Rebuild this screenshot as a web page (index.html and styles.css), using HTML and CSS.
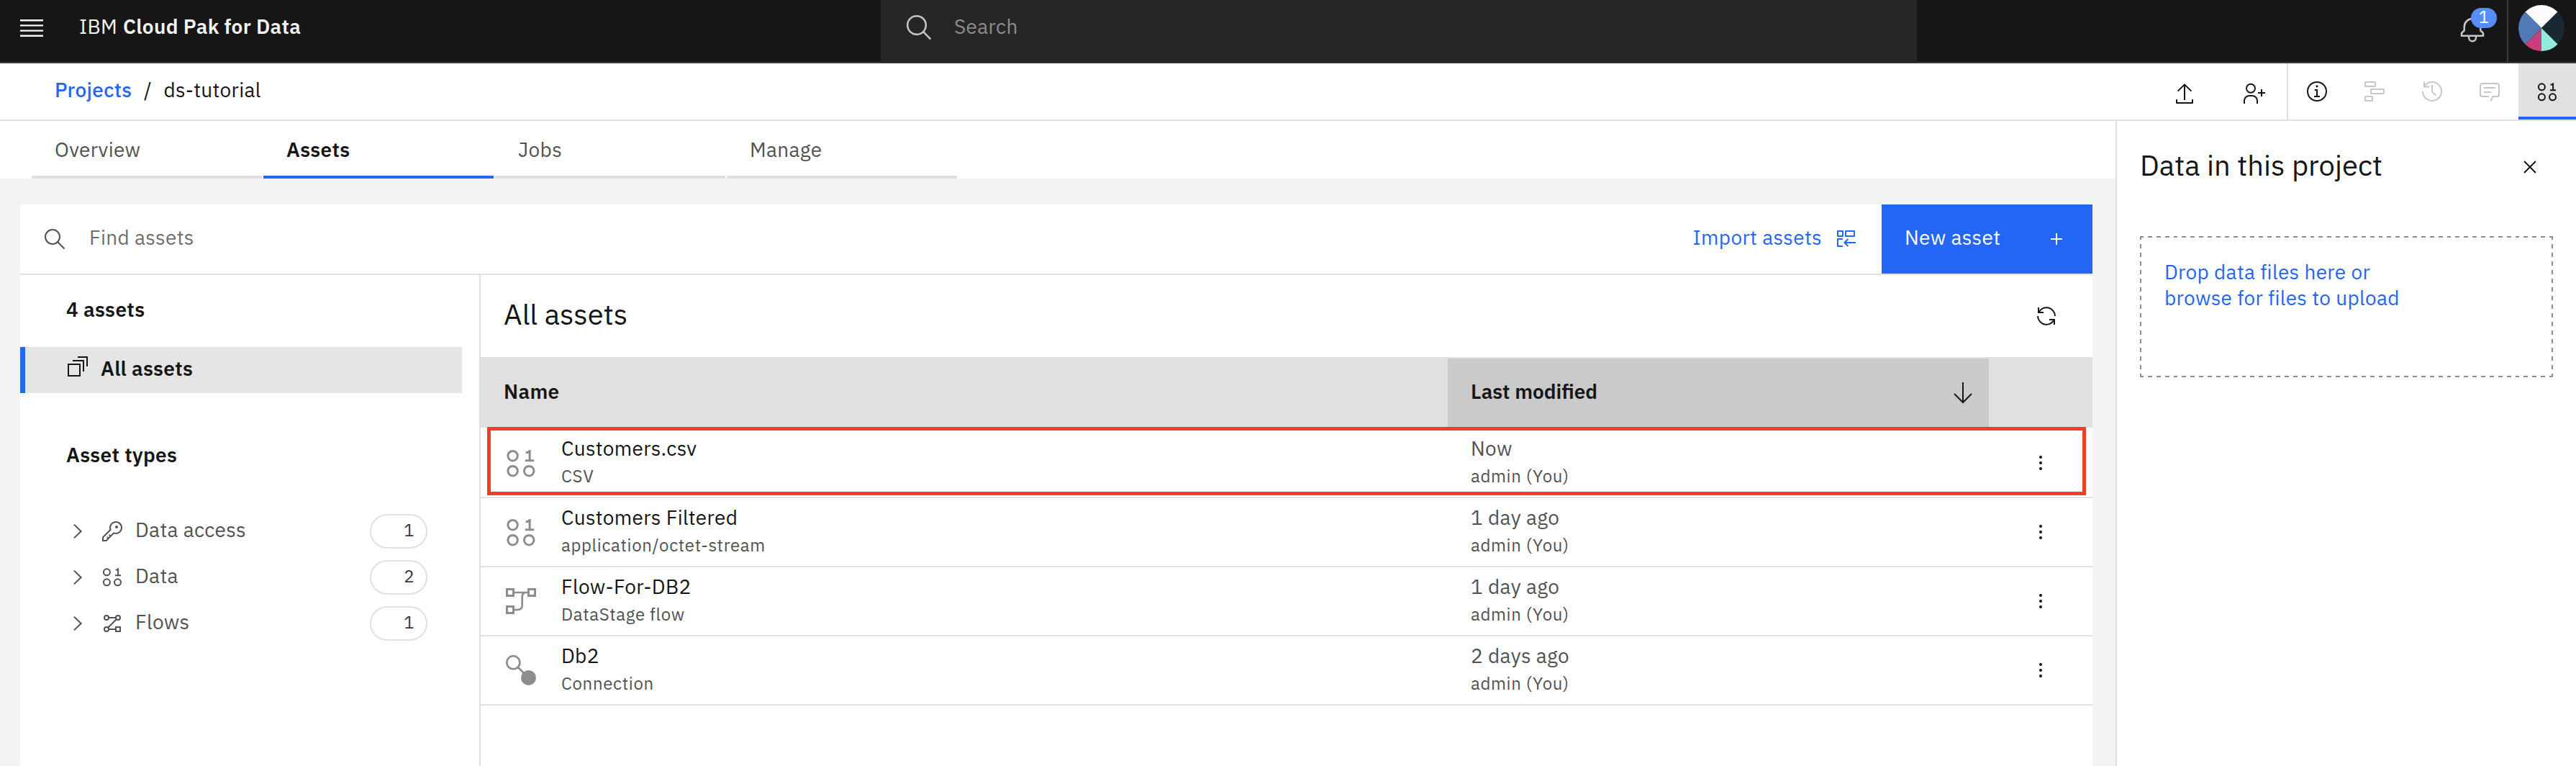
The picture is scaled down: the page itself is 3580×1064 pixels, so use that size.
FILE: index.html
```html
<!DOCTYPE html>
<html lang="en">
<head>
<meta charset="utf-8">
<title>ds-tutorial - IBM Cloud Pak for Data</title>
<link rel="stylesheet" href="styles.css">
</head>
<body>
<svg class="defs" aria-hidden="true">
  <symbol id="data" viewBox="0 0 32 32"><g fill="none" stroke="currentColor" stroke-width="2"><circle cx="8.4" cy="8.8" r="4.5"/><circle cx="8.4" cy="22.8" r="4.5"/><circle cx="23.5" cy="22.8" r="4.5"/><path d="M20.6 5.6h1.6q1.9 0 1.9-2.2M24.1 3.3v10M19.9 13.2H28"/></g></symbol>
  <symbol id="chevron" viewBox="0 0 32 32"><path d="M11 6.6 20.6 16 11 25.4" fill="none" stroke="currentColor" stroke-width="2"/></symbol>
  <symbol id="kebab" viewBox="0 0 32 32"><g fill="currentColor"><circle cx="16" cy="8" r="2"/><circle cx="16" cy="16" r="2"/><circle cx="16" cy="24" r="2"/></g></symbol>
</svg>

<header class="top">
  <button class="menu"><svg viewBox="0 0 20 20"><path d="M2 14.8H18V16H2zM2 11.2H18V12.4H2zM2 7.6H18V8.8H2zM2 4H18V5.2H2z" fill="currentColor"/></svg></button>
  <div class="brand"><span class="brand-ibm">IBM</span><b>Cloud Pak for Data</b></div>
  <div class="search">
    <svg viewBox="0 0 40 40"><path d="M27.4 27.4 37.3 37.3" stroke="currentColor" stroke-width="2.6"/><circle cx="18" cy="18" r="12.8" fill="none" stroke="currentColor" stroke-width="2.5"/></svg>
    <span>Search</span>
  </div>
  <div class="account">
    <button class="bell">
      <svg viewBox="0 0 32 32"><path fill="currentColor" d="M28.7071,19.293,26,16.5859V13a10.0136,10.0136,0,0,0-9-9.9492V1H15V3.0508A10.0136,10.0136,0,0,0,6,13v3.5859L3.2929,19.293A1,1,0,0,0,3,20v3a1,1,0,0,0,1,1h7v.7768a5.152,5.152,0,0,0,4.5,5.1987A5.0057,5.0057,0,0,0,21,25V24h7a1,1,0,0,0,1-1V20A1,1,0,0,0,28.7071,19.293ZM19,25a3,3,0,0,1-6,0V24h6Zm8-3H5V20.4141L7.707,17.707A1,1,0,0,0,8,17V13a8,8,0,0,1,16,0v4a1,1,0,0,0,.293.707L27,20.4141Z"/></svg>
      <span class="badge">1</span>
    </button>
    <button class="avatar"><svg viewBox="-32 -32 64 64"><path fill="#fcfcfc" d="M0 0-22.6-22.6A32 32 0 0 1 22.6-22.6Z"/><path fill="#192833" d="M0 0 22.6-22.6A32 32 0 0 1 22.6 22.6Z"/><path fill="#93ebdb" d="M0 0 22.6 22.6A32 32 0 0 1 0 32Z"/><path fill="#c93f7e" d="M0 0V32A32 32 0 0 1-22.6 22.6Z"/><path fill="#4f79b7" d="M0 0-22.6 22.6A32 32 0 0 1-22.6-22.6Z"/></svg></button>
  </div>
</header>

<div class="toolbar">
  <nav class="crumbs"><a>Projects</a><span>/</span><span>ds-tutorial</span></nav>
  <div class="actions">
    <button><svg viewBox="0 0 32 32"><path d="M16 25V4M6.6 12.6 16 3.4l9.4 9.2M5 24v5h22v-5" fill="none" stroke="currentColor" stroke-width="2" stroke-linejoin="round"/></svg></button>
    <button><svg viewBox="0 0 32 32"><g fill="none" stroke="currentColor" stroke-width="2"><circle cx="12" cy="8.8" r="6"/><path d="M3 30v-4a7 7 0 0 1 7-7h4a7 7 0 0 1 7 7v4M27 10v10M22 15h10"/></g></svg></button>
  </div>
  <div class="panels">
    <button><svg viewBox="0 0 32 32"><circle cx="16" cy="16" r="13" fill="none" stroke="currentColor" stroke-width="2"/><path d="M12.8 14H16v9M12 23h8" fill="none" stroke="currentColor" stroke-width="2"/><circle cx="16" cy="8.8" r="1.6" fill="currentColor"/></svg></button>
    <button class="off"><svg viewBox="0 0 32 32"><g fill="none" stroke="currentColor" stroke-width="2"><rect x="3" y="3" width="14" height="6" rx=".6"/><rect x="11" y="13" width="18" height="6" rx=".6"/><rect x="3" y="23" width="10" height="6" rx=".6"/></g></svg></button>
    <button class="off"><svg viewBox="0 0 32 32"><path d="M3 16A13 13 0 1 0 5.6 8.2M5 2.4v7h7.4M16 7v9.2l5.4 5.4" fill="none" stroke="currentColor" stroke-width="2"/></svg></button>
    <button class="off"><svg viewBox="0 0 32 32"><path d="M15 23H6a3 3 0 0 1-3-3V8a3 3 0 0 1 3-3h20a3 3 0 0 1 3 3v12a3 3 0 0 1-3 3h-5.4l-3.2 6.4M8 11h16M8 17h10" fill="none" stroke="currentColor" stroke-width="2"/></svg></button>
    <button class="active"><svg><use href="#data"/></svg></button>
  </div>
</div>

<div class="page">
  <main class="main">
    <nav class="tabs">
      <a>Overview</a><a class="on">Assets</a><a>Jobs</a><a>Manage</a>
    </nav>
    <section class="assets">
      <div class="finder">
        <svg class="glass" viewBox="0 0 32 32"><circle cx="13" cy="13" r="10" fill="none" stroke="currentColor" stroke-width="2"/><path d="M20.3 20.3 29.5 29.5" stroke="currentColor" stroke-width="2"/></svg>
        <span class="find">Find assets</span>
        <button class="import"><span>Import assets</span><svg viewBox="0 0 32 32"><g fill="none" stroke="currentColor" stroke-width="2" stroke-linejoin="round"><path d="M4 5h7v7H4zM15 5h12v7H15zM11 16H4v10h7"/><path d="M29 21H13.4M18.4 16 13.4 21l5 5"/></g></svg></button>
        <button class="new"><span>New asset</span><svg viewBox="0 0 32 32"><path d="M16 8v16M8 16h16" stroke="currentColor" stroke-width="2"/></svg></button>
      </div>
      <div class="body">
        <aside class="side">
          <h3>4 assets</h3>
          <a class="all"><svg viewBox="0 0 32 32"><path d="M3 13h16v16H3zM9 8h15v15M16 3h13v13" fill="none" stroke="currentColor" stroke-width="2"/></svg><span>All assets</span></a>
          <h3 class="types">Asset types</h3>
          <ul>
            <li><svg><use href="#chevron"/></svg><svg class="kind" viewBox="0 0 32 32"><path fill="currentColor" d="M21,2a8.9977,8.9977,0,0,0-8.6119,11.6118L2,24v6H8L18.3881,19.6118A9,9,0,1,0,21,2Zm0,16a7.0125,7.0125,0,0,1-2.0322-.3022L17.821,17.35l-.8472.8472-3.1811,3.1812L12.4141,20,11,21.4141l1.3787,1.3786-1.5859,1.586L9.4141,23,8,24.4141l1.3787,1.3786L7.1716,28H4V24.8284l9.8023-9.8023.8472-.8474-.3473-1.1467A7,7,0,1,1,21,18Z"/><circle cx="22" cy="10" r="2" fill="currentColor"/></svg><span class="label">Data access</span><span class="pill">1</span></li>
            <li><svg><use href="#chevron"/></svg><svg class="kind"><use href="#data"/></svg><span class="label">Data</span><span class="pill">2</span></li>
            <li><svg><use href="#chevron"/></svg><svg class="kind" viewBox="0 0 32 32"><g fill="none" stroke="currentColor" stroke-width="2"><circle cx="8" cy="8" r="3"/><circle cx="24" cy="8" r="3"/><circle cx="8" cy="24" r="3"/><path d="M21 21h6v6h-6zM11 8h10M11 24h10M10 22 22 10"/></g></svg><span class="label">Flows</span><span class="pill">1</span></li>
          </ul>
        </aside>
        <div class="list">
          <div class="list-head"><h2>All assets</h2><svg viewBox="0 0 32 32"><path d="M28 16A12 12 0 0 0 5.6 10.2M5 4v7h7M4 16a12 12 0 0 0 22.4 5.8M27 28v-7h-7" fill="none" stroke="currentColor" stroke-width="2"/></svg></div>
          <div class="row head"><div>Name</div><div class="sorted"><span>Last modified</span><svg viewBox="0 0 32 32"><path d="M16 1v27M4 17 16 29 28 17" fill="none" stroke="currentColor" stroke-width="2"/></svg></div></div>
          <div class="row marked">
            <svg class="type"><use href="#data"/></svg>
            <div class="name"><p>Customers.csv</p><small>CSV</small></div>
            <div class="when"><p>Now</p><small>admin (You)</small></div>
            <svg class="more"><use href="#kebab"/></svg>
          </div>
          <div class="row">
            <svg class="type"><use href="#data"/></svg>
            <div class="name"><p>Customers Filtered</p><small>application/octet-stream</small></div>
            <div class="when"><p>1 day ago</p><small>admin (You)</small></div>
            <svg class="more"><use href="#kebab"/></svg>
          </div>
          <div class="row">
            <svg class="type" viewBox="0 0 48 48"><g fill="none" stroke="currentColor" stroke-width="3"><path d="M4.5 6.5h9v9h-9zM34.5 6.5h9v9h-9zM4.5 30.5h9v9h-9z"/><path d="M15 11h18M15 35h4.5q6.2 0 6.2-6.2V17q0-6 6-6" stroke-width="2.7"/></g></svg>
            <div class="name"><p>Flow-For-DB2</p><small>DataStage flow</small></div>
            <div class="when"><p>1 day ago</p><small>admin (You)</small></div>
            <svg class="more"><use href="#kebab"/></svg>
          </div>
          <div class="row">
            <svg class="type" viewBox="0 0 48 48"><circle cx="13.4" cy="12.3" r="9.1" fill="none" stroke="currentColor" stroke-width="2.8"/><path d="M20 19 28 27" stroke="currentColor" stroke-width="2.8"/><circle cx="34.5" cy="33.4" r="10.5" fill="currentColor"/></svg>
            <div class="name"><p>Db2</p><small>Connection</small></div>
            <div class="when"><p>2 days ago</p><small>admin (You)</small></div>
            <svg class="more"><use href="#kebab"/></svg>
          </div>
        </div>
      </div>
    </section>
  </main>
  <aside class="drawer">
    <div class="drawer-head"><h2>Data in this project</h2><svg viewBox="0 0 32 32"><path d="M8 8 24 24M24 8 8 24" stroke="currentColor" stroke-width="2"/></svg></div>
    <div class="drop"><span>Drop data files here or</span><span>browse for files to upload</span></div>
  </aside>
</div>
</body>
</html>
```
FILE: styles.css
```css
* { box-sizing: border-box; margin: 0; padding: 0; }
body {
  width: 3580px; height: 1064px; overflow: hidden;
  display: flex; flex-direction: column;
  background: #fff; color: #161616;
  font: 400 28px/36px "IBM Plex Sans", "Open Sans", "Noto Sans", sans-serif;
  letter-spacing: .32px;
}
button { display: flex; align-items: flex-start; background: none; border: 0; font: inherit; letter-spacing: inherit; color: inherit; }
svg { display: block; flex: none; width: 32px; height: 32px; }
.defs { display: none; }
ul { list-style: none; }

/* header */
.top { height: 88px; flex: none; display: flex; align-items: flex-start; background: #161616; border-bottom: 2px solid #393939; color: #f4f4f4; }
.menu { padding: 19px 0 0 24px; }
.menu svg, .bell svg, .search svg { width: 40px; height: 40px; }
.brand { display: flex; width: 1160px; padding: 19px 0 0 46px; }
.brand-ibm { width: 61px; }
.brand b { font-weight: 600; }
.search { width: 1440px; height: 87px; display: flex; background: #262626; color: #c6c6c6; padding: 17px 0 0 32px; }
.search span { color: #8d8d8d; margin: 2px 0 0 30px; }
.account { display: flex; flex: 1; height: 86px; justify-content: flex-end; }
.bell { position: relative; width: 70px; padding: 21px 0 0 2px; color: #c6c6c6; }
.badge { position: absolute; left: 20px; top: 11px; width: 36px; height: 28px; border-radius: 14px; background: #568ef8; color: #fff; font-size: 24px; line-height: 24px; text-align: center; }
.avatar { width: 96px; border-left: 2px solid #393939; padding: 7px 0 0 14px; }
.avatar svg { width: 64px; height: 64px; }

/* breadcrumb bar */
.toolbar { height: 80px; flex: none; display: flex; border-bottom: 2px solid #e0e0e0; }
.crumbs { flex: 1; display: flex; padding: 19px 0 0 76px; gap: 16.5px; }
.crumbs a { color: #2466f6; font-weight: 500; }
.actions { display: flex; gap: 64px; padding: 26px 30px 0 0; }
.panels { display: flex; border-left: 2px solid #e0e0e0; }
.panels button { width: 80px; padding: 23px 0 0 24px; }
.panels .off { color: #c6c6c6; }
.panels .active { padding-top: 24px; background: #e0e0e0; border-bottom: 4px solid #2466f6; }

/* page */
.page { flex: 1; display: flex; min-height: 0; }
.main { width: 2940px; background: #f3f3f3; display: flex; flex-direction: column; }
.tabs { height: 80px; flex: none; display: flex; gap: 2px; padding-left: 44px; background: #fff; }
.tabs a { width: 320px; padding: 22px 0 0 32px; border-bottom: 4px solid #e0e0e0; color: #525252; }
.tabs .on { font-weight: 600; color: #161616; border-color: #2466f6; }
.assets { flex: 1; margin: 36px 32px 0 28px; background: #fff; display: flex; flex-direction: column; }
.finder { height: 98px; flex: none; display: flex; border-bottom: 2px solid #e0e0e0; }
.glass { margin: 32px 0 0 32px; color: #525252; }
.find { flex: 1; padding: 28px 0 0 32px; color: #6f6f6f; }
.import { padding: 28px 33px 0 0; color: #2466f6; }
.import svg { margin: 4px 0 0 18px; }
.new { width: 293px; justify-content: space-between; padding: 28px 34px 0 32px; background: #2466f6; color: #fff; }
.new svg { margin-top: 4px; }
.body { flex: 1; display: flex; }

/* sidebar */
.side { width: 640px; border-right: 2px solid #e0e0e0; padding-top: 30px; }
.side h3 { padding-left: 64px; font-size: 28px; font-weight: 600; }
.all { display: flex; width: 614px; height: 64px; margin-top: 34px; padding: 11px 0 0 57px; border-left: 7px solid #2466f6; background: #e5e5e5; font-weight: 600; }
.all svg { margin-right: 16px; }
.all span { padding-top: 1px; }
.side .types { margin-top: 68px; }
.side ul { margin-top: 56px; }
.side li { height: 64px; display: flex; align-items: center; padding: 0 72px 0 64px; color: #525252; }
.kind { margin-left: 16px; }
.label { flex: 1; margin: -4px 0 0 16px; }
.pill { width: 80px; height: 48px; border: 2px solid #e0e0e0; border-radius: 24px; padding-right: 16px; font-size: 24px; line-height: 40px; text-align: right; color: #393939; }

/* asset list */
.list { flex: 1; }
.list-head { height: 114px; display: flex; justify-content: space-between; padding: 41px 48px 0 32px; }
.list-head h2, .drawer-head h2 { font-size: 40px; line-height: 48px; font-weight: 400; letter-spacing: 0; }
.list-head h2 { margin-top: -11px; }
.row { position: relative; display: grid; grid-template-columns: 112px 1232px 752px 144px; height: 96px; border-bottom: 2px solid #e0e0e0; }
.head { height: 98px; grid-template-columns: 1344px 752px 144px; background: #e0e0e0; border: 0; padding-top: 2px; font-weight: 600; }
.head > div { padding: 28px 20px 0 32px; }
.head .sorted { display: flex; justify-content: space-between; background: #cacaca; letter-spacing: 0; }
.sorted svg { margin-top: 4px; }
.marked { height: 98px; padding-top: 2px; }
.marked::after { content: ""; position: absolute; inset: -1px 9px 2px 9px; border: 5px solid #ee4027; }
.type { width: 48px; height: 48px; margin: 24px 0 0 32px; color: #8d8d8d; }
.name { padding-top: 9px; }
.when { padding: 9px 0 0 32px; color: #525252; }
.row small { display: block; margin-top: 4px; font-size: 24px; line-height: 32px; letter-spacing: .64px; color: #525252; }
.more { margin: 31px 0 0 56px; }

/* drawer */
.drawer { flex: 1; border-left: 2px solid #e0e0e0; padding: 37px 32px 0; }
.drawer-head { display: flex; justify-content: space-between; padding-right: 16px; }
.drawer-head svg { margin-top: 11px; }
.drop {
  --dash-x: repeating-linear-gradient(90deg, #8d8d8d 0 5px, transparent 5px 11px, #8d8d8d 11px 11.875px);
  --dash-y: repeating-linear-gradient(#8d8d8d 0 5px, transparent 5px 11px, #8d8d8d 11px 12px);
  display: flex; flex-direction: column; height: 196px; margin-top: 75px; padding: 32px 34px; color: #2466f6;
  background: var(--dash-x) top / 100% 2px, var(--dash-x) bottom / 100% 2px, var(--dash-y) left / 2px 100%, var(--dash-y) right / 2px 100%;
  background-repeat: no-repeat;
}
```
